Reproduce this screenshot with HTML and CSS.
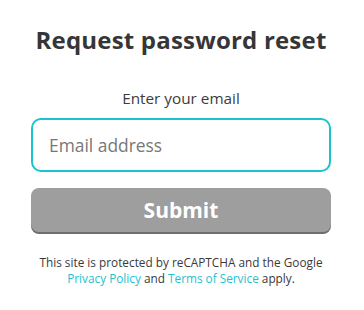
FILE: index.html
```html
<!DOCTYPE html>
<html>
<head>
<meta charset="utf-8">
<link rel="stylesheet" href="styles.css">
</head>
<body>
<div class="page">
  <h1 class="title">Request password reset</h1>
  <form class="form">
    <label class="label" for="email">Enter your email</label>
    <input class="input" id="email" type="email" placeholder="Email address">
    <button class="submit" type="button">Submit</button>
  </form>
  <p class="legal">This site is protected by reCAPTCHA and the Google<br><a href="#">Privacy Policy</a> and <a href="#">Terms of Service</a> apply.</p>
</div>
</body>
</html>
```
FILE: styles.css
```css
html, body {
  margin: 0;
  padding: 0;
  background: #ffffff;
}
body {
  font-family: "Open Sans", Lato, sans-serif;
  color: #3a3a3a;
}
.page {
  width: 300px;
  margin-left: 31px;
  padding-top: 24px;
}
.title {
  margin: 0;
  font-size: 24px;
  line-height: 32px;
  font-weight: 700;
  letter-spacing: 0.2px;
  text-align: center;
  color: #363636;
}
.form {
  display: flex;
  flex-direction: column;
  margin-top: 32px;
}
.label {
  font-size: 15.3px;
  line-height: 20px;
  text-align: center;
  color: #3c3c3c;
}
.input {
  box-sizing: border-box;
  margin-top: 10px;
  width: 300px;
  height: 54px;
  border: 2px solid #1cc3cf;
  border-radius: 10px;
  padding: 0 16px;
  font-family: inherit;
  font-size: 17.4px;
  color: #333;
  outline: none;
  background: #fff;
}
.input::placeholder {
  color: #777777;
}
.submit {
  box-sizing: border-box;
  margin-top: 16px;
  width: 300px;
  height: 44px;
  border: none;
  border-radius: 8px;
  background: #9e9e9e;
  box-shadow: 0 2px 0 #6e6e6e;
  color: #ffffff;
  font-family: inherit;
  font-size: 21px;
  font-weight: 700;
  padding: 0;
}
.legal {
  margin: 22px 0 0;
  font-size: 11.8px;
  line-height: 16px;
  text-align: center;
  color: #3a3a3a;
}
.legal a {
  color: #1cc3cf;
  text-decoration: none;
}
```
